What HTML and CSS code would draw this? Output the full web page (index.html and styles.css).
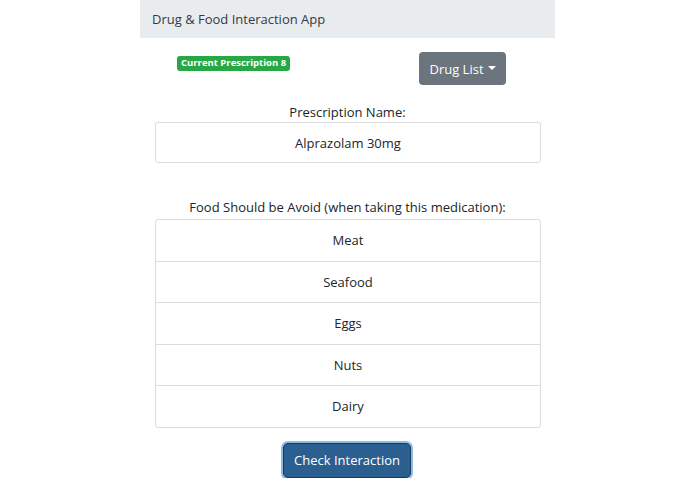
FILE: index.html
```html
<!DOCTYPE html>
<html>
<head>
<meta charset="utf-8">
<link rel="stylesheet" href="styles.css">
</head>
<body>
<div class="app">
  <header class="navbar">Drug &amp; Food Interaction App</header>
  <div class="toprow">
    <span class="badge">Current Prescription 8</span>
    <button class="dropdown">Drug List <span class="caret"></span></button>
  </div>
  <div class="label">Prescription Name:</div>
  <div class="box">Alprazolam 30mg</div>
  <div class="label label-food">Food Should be Avoid (when taking this medication):</div>
  <ul class="list">
    <li>Meat</li>
    <li>Seafood</li>
    <li>Eggs</li>
    <li>Nuts</li>
    <li>Dairy</li>
  </ul>
  <div class="actions">
    <button class="check">Check Interaction</button>
  </div>
</div>
</body>
</html>
```
FILE: styles.css
```css
* { box-sizing: border-box; }
body {
  margin: 0;
  background: #fff;
  font-family: "Open Sans", "Noto Sans", sans-serif;
  font-size: 13px;
  color: #212529;
}
.app {
  width: 415px;
  margin: 0 auto;
}
.navbar {
  height: 38px;
  background: #e9ecef;
  padding: 0 12px;
  display: flex;
  align-items: center;
  font-size: 13px;
  color: #343a40;
}
.toprow {
  display: flex;
  justify-content: space-between;
  align-items: flex-start;
  padding: 14px 49px 0 37px;
  height: 62px;
}
.badge {
  margin-top: 4px;
  background: #28a745;
  color: #fff;
  font-weight: 700;
  font-size: 9.5px;
  padding: 1px 4px 2px;
  border-radius: 3px;
  line-height: 12px;
}
.dropdown {
  width: 87px;
  height: 33px;
  background: #6c757d;
  color: #fff;
  border: none;
  border-radius: 4px;
  font-family: inherit;
  font-size: 13px;
  display: flex;
  align-items: center;
  justify-content: center;
  gap: 4px;
  padding: 0;
}
.caret {
  display: inline-block;
  width: 0;
  height: 0;
  border-left: 4px solid transparent;
  border-right: 4px solid transparent;
  border-top: 4px solid #fff;
  margin-top: -2px;
}
.label {
  text-align: center;
  line-height: 20px;
  height: 20px;
  margin-top: 2px;
}
.label-food {
  margin-top: 33px;
  height: 23px;
  line-height: 22px;
}
.box {
  margin: 0 14px 0 15px;
  height: 41px;
  border: 1px solid #dcdcdc;
  border-radius: 3px;
  display: flex;
  align-items: center;
  justify-content: center;
}
.list {
  list-style: none;
  margin: 0 14px 0 15px;
  padding: 0;
  border: 1px solid #dcdcdc;
  border-radius: 3px;
}
.list li {
  height: 41.5px;
  display: flex;
  align-items: center;
  justify-content: center;
  border-top: 1px solid #dcdcdc;
}
.list li:first-child { border-top: none; height: 40.5px; }
.actions {
  display: flex;
  justify-content: center;
  padding-top: 15px;
  padding-right: 1px;
}
.check {
  width: 128px;
  height: 35px;
  background: #2b5f8f;
  color: #fff;
  border: 1px solid #1a3a5a;
  border-radius: 5px;
  box-shadow: 0 0 0 2px #8cbbe8;
  font-family: inherit;
  font-size: 13px;
  padding: 0;
}
```
